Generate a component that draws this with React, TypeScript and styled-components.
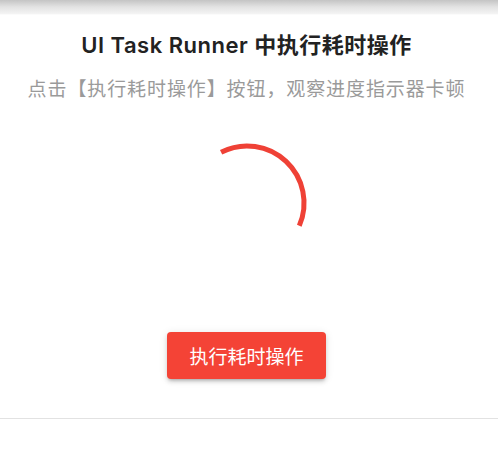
import styled, { createGlobalStyle } from 'styled-components';

const GlobalStyle = createGlobalStyle`
  html, body {
    margin: 0;
    padding: 0;
    background: #ffffff;
  }
  body {
    font-family: Inter, 'Noto Sans CJK SC', sans-serif;
    -webkit-font-smoothing: antialiased;
  }
`;

const Page = styled.div`
  display: flex;
  flex-direction: column;
  width: 498px;
  height: 454px;
  overflow: hidden;
`;

const TopShade = styled.div`
  height: 15px;
  background: linear-gradient(180deg, #c4c4c4 0%, #e2e2e2 45%, #f3f3f3 90%, #ffffff 100%);
`;

const Content = styled.main`
  display: flex;
  flex-direction: column;
  align-items: center;
  padding-right: 5px;
`;

const Title = styled.h1`
  margin: 15px 0 0;
  font-size: 22px;
  line-height: 30px;
  font-weight: 600;
  color: #222222;
  letter-spacing: 0.5px;
  white-space: nowrap;
`;

const Subtitle = styled.p`
  margin: 15px 0 0;
  font-size: 19px;
  line-height: 30px;
  font-weight: 400;
  color: #9a9a9a;
  letter-spacing: 0.9px;
  white-space: nowrap;
`;

const Spinner = styled.svg`
  display: block;
  margin-top: 33px;
  width: 130px;
  height: 130px;
`;

const ActionButton = styled.button`
  margin-top: 64px;
  height: 47px;
  padding: 0 22px;
  border: none;
  border-radius: 4px;
  background: #f44336;
  color: #ffffff;
  font-family: inherit;
  font-size: 19px;
  font-weight: 400;
  box-shadow: 0 3px 3px -2px rgba(0, 0, 0, 0.2), 0 3px 4px 0 rgba(0, 0, 0, 0.12),
    0 1px 8px 0 rgba(0, 0, 0, 0.1);
  cursor: pointer;
`;

const Divider = styled.hr`
  margin: 39px 0 0;
  border: none;
  border-top: 1px solid #e2e2e2;
  width: 100%;
`;

const App = () => {
  return (
    <Page>
      <GlobalStyle />
      <TopShade />
      <Content>
        <Title>UI Task Runner 中执行耗时操作</Title>
        <Subtitle>点击【执行耗时操作】按钮，观察进度指示器卡顿</Subtitle>
        <Spinner viewBox="0 0 130 130" aria-label="loading">
          <path
            d="M39.1 14.2 A57 57 0 0 1 117.3 87.7"
            fill="none"
            stroke="#ef4136"
            strokeWidth={5}
          />
        </Spinner>
        <ActionButton type="button">执行耗时操作</ActionButton>
      </Content>
      <Divider />
    </Page>
  );
};

export default App;
